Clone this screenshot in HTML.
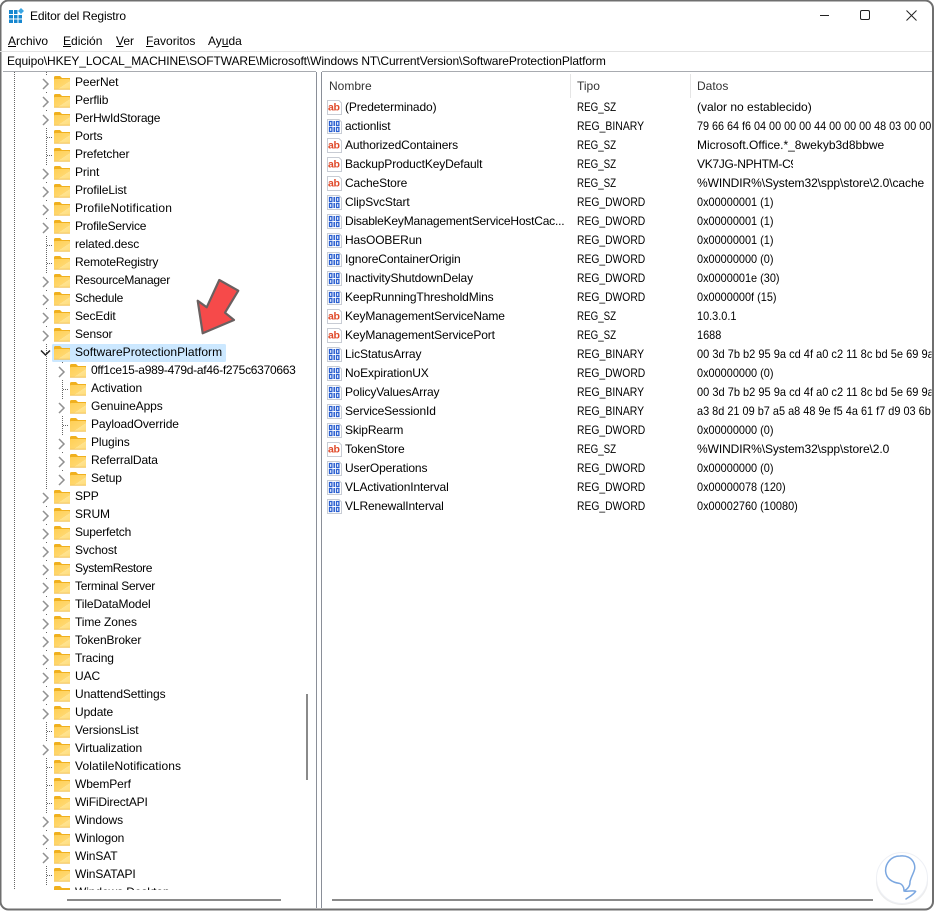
<!DOCTYPE html>
<html><head><meta charset="utf-8"><style>
html,body{margin:0;padding:0;background:#fff}
body{width:935px;height:911px;overflow:hidden;position:relative;font:12px/22px "Liberation Sans",sans-serif;color:#000}
div{position:absolute;white-space:nowrap}
svg{position:absolute;left:0;top:0}
.t{left:75px;letter-spacing:-.1px;margin-top:-1px}.c{left:91px;letter-spacing:-.1px;margin-top:-1px}
.m{margin-top:-1px}
.n{left:345px;letter-spacing:-.12px}
.y,.w,.h,.k{transform-origin:0 50%}
.y{left:577px;transform:scaleX(.86)}.z{transform:scaleX(.815)}.b{transform:scaleX(.87)}
.d{left:697px}.w{transform:scaleX(.91)}.h{transform:scaleX(.9);width:261px;overflow:hidden}.k{transform:scaleX(.92);width:255px;overflow:hidden}
u{text-decoration:underline}
</style></head><body>
<svg width="935" height="911" viewBox="0 0 935 911" fill="none">
<defs>
<linearGradient id="g" x1="0" y1="0" x2="1" y2="1"><stop offset="0" stop-color="#ffcf55"/><stop offset=".6" stop-color="#ffd76e"/><stop offset=".6" stop-color="#ffe38f"/><stop offset="1" stop-color="#ffdc7a"/></linearGradient>
<g id="f"><path d="M0 1.500Q0 0 1.500 0H6L8 2H16V5H0Z" fill="#f0b01e"/><rect y="3" width="16" height="10.500" rx="1" fill="url(#g)"/><path d="M0 13.200H16" stroke="#f2c35a"/></g>
<g id="h"><rect x="-3" y="-8" width="9" height="16" fill="#fff"/><path d="M0 -5L5 0L0 5" stroke="#909090" stroke-width="1.500"/></g>
<g id="s"><path d="M.5 .5H12L14.500 3V14.500H.5Z" fill="#fff" stroke="#c8ccd4"/><text x="1" y="10.500" font-family="Liberation Sans" font-weight="700" font-size="10.500" letter-spacing="-.4" fill="#e04a2a">ab</text></g>
<g id="b"><path d="M.5 .5H12L14.500 3V14.500H.5Z" fill="#fff" stroke="#c8ccd4"/><path d="M2.500 2.500h2.400v4H2.500zM9.500 2.500h2.400v4H9.500zM2.500 8.500h2.400v4H2.500zM9.500 8.500h2.400v4H9.500z" stroke="#2a5fd0" stroke-width="1.300"/><path d="M7.200 2v5M7.200 8v5" stroke="#2a5fd0" stroke-width="1.500"/></g>
</defs>
<rect x=".5" y=".5" width="932.500" height="909" rx="8" fill="#fff" stroke="#6f6f6f" stroke-width="2"/>
<path d="M0 51.500H932" stroke="#e2e2e2"/>
<path d="M3 71.500H316M322 71.500H932" stroke="#a8abb0"/>
<path d="M316.500 72V908M321.500 72V908" stroke="#8a8f98"/>
<!-- app icon -->
<path d="M9 10h4v4H9zM14 10h3.500v4H14zM9 15h4v3.500H9zM14 15h3.500v3.500H14zM18.500 15H22v3.500h-3.500zM9 19.500h4V23H9zM14 19.500h3.500V23H14zM18.500 19.500H22V23h-3.500z" fill="#1787cf"/>
<path d="M21 8L24 11L21 14L18 11Z" fill="#39a6e4"/>
<!-- window controls -->
<path d="M820 15.500H829" stroke="#222"/>
<rect x="860.500" y="10.500" width="9" height="9" rx="1.500" stroke="#222"/>
<path d="M906.500 10.500L916.500 20.500M916.500 10.500L906.500 20.500" stroke="#222"/>
<!-- tree lines -->
<path d="M14.500 72V890M46.500 72V885M62.500 362V480" stroke="#666" stroke-dasharray="1 1"/>
<path d="M47 137.500H53M47 155.500H53M47 245.500H53M47 263.500H53M47 731.500H53M47 767.500H53M47 785.500H53M47 803.500H53M47 875.500H53M63 389.500H69M63 425.500H69" stroke="#666" stroke-dasharray="1 1"/>
<!-- selection -->
<rect x="52" y="344" width="174" height="18" rx="1.500" fill="#cce8ff"/>
<!-- chevrons -->
<use href="#h" x="43" y="84"/><use href="#h" x="43" y="102"/><use href="#h" x="43" y="120"/><use href="#h" x="43" y="174"/><use href="#h" x="43" y="192"/><use href="#h" x="43" y="210"/><use href="#h" x="43" y="228"/><use href="#h" x="43" y="282"/><use href="#h" x="43" y="300"/><use href="#h" x="43" y="318"/><use href="#h" x="43" y="336"/>
<use href="#h" x="59" y="372"/><use href="#h" x="59" y="408"/><use href="#h" x="59" y="444"/><use href="#h" x="59" y="462"/><use href="#h" x="59" y="480"/>
<use href="#h" x="43" y="498"/><use href="#h" x="43" y="516"/><use href="#h" x="43" y="534"/><use href="#h" x="43" y="552"/><use href="#h" x="43" y="570"/><use href="#h" x="43" y="588"/><use href="#h" x="43" y="606"/><use href="#h" x="43" y="624"/><use href="#h" x="43" y="642"/><use href="#h" x="43" y="660"/><use href="#h" x="43" y="678"/><use href="#h" x="43" y="696"/><use href="#h" x="43" y="714"/><use href="#h" x="43" y="750"/><use href="#h" x="43" y="822"/><use href="#h" x="43" y="840"/><use href="#h" x="43" y="858"/>
<path d="M41 350.500L45.500 355L50 350.500" stroke="#222" stroke-width="1.500"/>
<!-- folders -->
<use href="#f" x="54" y="76"/><use href="#f" x="54" y="94"/><use href="#f" x="54" y="112"/><use href="#f" x="54" y="130"/><use href="#f" x="54" y="148"/><use href="#f" x="54" y="166"/><use href="#f" x="54" y="184"/><use href="#f" x="54" y="202"/><use href="#f" x="54" y="220"/><use href="#f" x="54" y="238"/><use href="#f" x="54" y="256"/><use href="#f" x="54" y="274"/><use href="#f" x="54" y="292"/><use href="#f" x="54" y="310"/><use href="#f" x="54" y="328"/><use href="#f" x="54" y="346"/>
<use href="#f" x="70" y="364"/><use href="#f" x="70" y="382"/><use href="#f" x="70" y="400"/><use href="#f" x="70" y="418"/><use href="#f" x="70" y="436"/><use href="#f" x="70" y="454"/><use href="#f" x="70" y="472"/>
<use href="#f" x="54" y="490"/><use href="#f" x="54" y="508"/><use href="#f" x="54" y="526"/><use href="#f" x="54" y="544"/><use href="#f" x="54" y="562"/><use href="#f" x="54" y="580"/><use href="#f" x="54" y="598"/><use href="#f" x="54" y="616"/><use href="#f" x="54" y="634"/><use href="#f" x="54" y="652"/><use href="#f" x="54" y="670"/><use href="#f" x="54" y="688"/><use href="#f" x="54" y="706"/><use href="#f" x="54" y="724"/><use href="#f" x="54" y="742"/><use href="#f" x="54" y="760"/><use href="#f" x="54" y="778"/><use href="#f" x="54" y="796"/><use href="#f" x="54" y="814"/><use href="#f" x="54" y="832"/><use href="#f" x="54" y="850"/><use href="#f" x="54" y="868"/>
<path d="M54 887.500Q54 886 55.500 886H60L62 888H70V890H54Z" fill="#f0b01e"/>
<!-- header separators -->
<path d="M570.500 74V98M690.500 74V98" stroke="#e5e5e5"/>
<!-- list icons -->
<use href="#s" x="327" y="100"/><use href="#b" x="327" y="119"/><use href="#s" x="327" y="138"/><use href="#s" x="327" y="157"/><use href="#s" x="327" y="176"/><use href="#b" x="327" y="195"/><use href="#b" x="327" y="214"/><use href="#b" x="327" y="233"/><use href="#b" x="327" y="252"/><use href="#b" x="327" y="271"/><use href="#b" x="327" y="290"/><use href="#s" x="327" y="309"/><use href="#s" x="327" y="328"/><use href="#b" x="327" y="347"/><use href="#b" x="327" y="366"/><use href="#b" x="327" y="385"/><use href="#b" x="327" y="404"/><use href="#b" x="327" y="423"/><use href="#s" x="327" y="442"/><use href="#b" x="327" y="461"/><use href="#b" x="327" y="480"/><use href="#b" x="327" y="499"/>
<!-- scrollbars -->
<rect x="306" y="694" width="2" height="86" fill="#8a8a8a"/>
<rect x="67" y="899" width="214" height="2" fill="#8a8a8a"/>
<rect x="332" y="899" width="541" height="2" fill="#8a8a8a"/>
</svg>

<div class="m" style="left:30px;top:6px;letter-spacing:-.15px">Editor del Registro</div>
<div class="m" style="left:8px;top:31px"><u>A</u>rchivo</div>
<div class="m" style="left:63px;top:31px"><u>E</u>dición</div>
<div class="m" style="left:116px;top:31px"><u>V</u>er</div>
<div class="m" style="left:146px;top:31px"><u>F</u>avoritos</div>
<div class="m" style="left:208px;top:31px">Ay<u>u</u>da</div>
<div class="m" style="left:7px;top:51px;letter-spacing:-.1px">Equipo\HKEY_LOCAL_MACHINE\SOFTWARE\Microsoft\Windows NT\CurrentVersion\SoftwareProtectionPlatform</div>

<div style="left:0;top:0;width:316px;height:890px;overflow:hidden">
<div class="t" style="top:72px">PeerNet</div>
<div class="t" style="top:90px">Perflib</div>
<div class="t" style="top:108px;letter-spacing:-.2px">PerHwIdStorage</div>
<div class="t" style="top:126px">Ports</div>
<div class="t" style="top:144px">Prefetcher</div>
<div class="t" style="top:162px">Print</div>
<div class="t" style="top:180px">ProfileList</div>
<div class="t" style="top:198px;letter-spacing:.2px">ProfileNotification</div>
<div class="t" style="top:216px;letter-spacing:-.2px">ProfileService</div>
<div class="t" style="top:234px">related.desc</div>
<div class="t" style="top:252px;letter-spacing:-.2px">RemoteRegistry</div>
<div class="t" style="top:270px;letter-spacing:-.25px">ResourceManager</div>
<div class="t" style="top:288px;letter-spacing:-.25px">Schedule</div>
<div class="t" style="top:306px">SecEdit</div>
<div class="t" style="top:324px">Sensor</div>
<div class="t" style="top:342px;letter-spacing:.04px">SoftwareProtectionPlatform</div>
<div class="c" style="top:360px;letter-spacing:-.28px">0ff1ce15-a989-479d-af46-f275c6370663</div>
<div class="c" style="top:378px">Activation</div>
<div class="c" style="top:396px">GenuineApps</div>
<div class="c" style="top:414px">PayloadOverride</div>
<div class="c" style="top:432px">Plugins</div>
<div class="c" style="top:450px">ReferralData</div>
<div class="c" style="top:468px">Setup</div>
<div class="t" style="top:486px">SPP</div>
<div class="t" style="top:504px">SRUM</div>
<div class="t" style="top:522px;letter-spacing:-.2px">Superfetch</div>
<div class="t" style="top:540px">Svchost</div>
<div class="t" style="top:558px;letter-spacing:-.38px">SystemRestore</div>
<div class="t" style="top:576px;letter-spacing:-.27px">Terminal Server</div>
<div class="t" style="top:594px">TileDataModel</div>
<div class="t" style="top:612px">Time Zones</div>
<div class="t" style="top:630px">TokenBroker</div>
<div class="t" style="top:648px">Tracing</div>
<div class="t" style="top:666px">UAC</div>
<div class="t" style="top:684px">UnattendSettings</div>
<div class="t" style="top:702px">Update</div>
<div class="t" style="top:720px">VersionsList</div>
<div class="t" style="top:738px">Virtualization</div>
<div class="t" style="top:756px;letter-spacing:.1px">VolatileNotifications</div>
<div class="t" style="top:774px">WbemPerf</div>
<div class="t" style="top:792px;letter-spacing:-.15px">WiFiDirectAPI</div>
<div class="t" style="top:810px">Windows</div>
<div class="t" style="top:828px">Winlogon</div>
<div class="t" style="top:846px">WinSAT</div>
<div class="t" style="top:864px">WinSATAPI</div>
<div class="t" style="top:882px">Windows Desktop</div>
</div>

<div style="left:329px;top:75px;color:#333">Nombre</div>
<div style="left:577px;top:75px;color:#333">Tipo</div>
<div style="left:697px;top:75px;color:#333">Datos</div>

<div class="n" style="top:96px">(Predeterminado)</div><div class="y z" style="top:96px">REG_SZ</div><div class="d" style="top:96px">(valor no establecido)</div>
<div class="n" style="top:115px">actionlist</div><div class="y b" style="top:115px">REG_BINARY</div><div class="d h" style="top:115px">79 66 64 f6 04 00 00 00 44 00 00 00 48 03 00 00</div>
<div class="n" style="top:134px">AuthorizedContainers</div><div class="y z" style="top:134px">REG_SZ</div><div class="d" style="top:134px">Microsoft.Office.*_8wekyb3d8bbwe</div>
<div class="n" style="top:153px">BackupProductKeyDefault</div><div class="y z" style="top:153px">REG_SZ</div><div class="d" style="top:153px;width:96px;overflow:hidden;letter-spacing:-.3px">VK7JG-NPHTM-C9</div>
<div class="n" style="top:172px">CacheStore</div><div class="y z" style="top:172px">REG_SZ</div><div class="d" style="top:172px;letter-spacing:-.08px">%WINDIR%\System32\spp\store\2.0\cache</div>
<div class="n" style="top:191px">ClipSvcStart</div><div class="y" style="top:191px">REG_DWORD</div><div class="d w" style="top:191px">0x00000001 (1)</div>
<div class="n" style="top:210px;letter-spacing:-.2px">DisableKeyManagementServiceHostCac...</div><div class="y" style="top:210px">REG_DWORD</div><div class="d w" style="top:210px">0x00000001 (1)</div>
<div class="n" style="top:229px">HasOOBERun</div><div class="y" style="top:229px">REG_DWORD</div><div class="d w" style="top:229px">0x00000001 (1)</div>
<div class="n" style="top:248px">IgnoreContainerOrigin</div><div class="y" style="top:248px">REG_DWORD</div><div class="d w" style="top:248px">0x00000000 (0)</div>
<div class="n" style="top:267px">InactivityShutdownDelay</div><div class="y" style="top:267px">REG_DWORD</div><div class="d w" style="top:267px">0x0000001e (30)</div>
<div class="n" style="top:286px">KeepRunningThresholdMins</div><div class="y" style="top:286px">REG_DWORD</div><div class="d w" style="top:286px">0x0000000f (15)</div>
<div class="n" style="top:305px">KeyManagementServiceName</div><div class="y z" style="top:305px">REG_SZ</div><div class="d w" style="top:305px">10.3.0.1</div>
<div class="n" style="top:324px">KeyManagementServicePort</div><div class="y z" style="top:324px">REG_SZ</div><div class="d w" style="top:324px">1688</div>
<div class="n" style="top:343px">LicStatusArray</div><div class="y b" style="top:343px">REG_BINARY</div><div class="d k" style="top:343px">00 3d 7b b2 95 9a cd 4f a0 c2 11 8c bd 5e 69 9a</div>
<div class="n" style="top:362px">NoExpirationUX</div><div class="y" style="top:362px">REG_DWORD</div><div class="d w" style="top:362px">0x00000000 (0)</div>
<div class="n" style="top:381px">PolicyValuesArray</div><div class="y b" style="top:381px">REG_BINARY</div><div class="d k" style="top:381px">00 3d 7b b2 95 9a cd 4f a0 c2 11 8c bd 5e 69 9a</div>
<div class="n" style="top:400px">ServiceSessionId</div><div class="y b" style="top:400px">REG_BINARY</div><div class="d k" style="top:400px;transform:scaleX(.91);width:258px">a3 8d 21 09 b7 a5 a8 48 9e f5 4a 61 f7 d9 03 6b</div>
<div class="n" style="top:419px">SkipRearm</div><div class="y" style="top:419px">REG_DWORD</div><div class="d w" style="top:419px">0x00000000 (0)</div>
<div class="n" style="top:438px">TokenStore</div><div class="y z" style="top:438px">REG_SZ</div><div class="d" style="top:438px;letter-spacing:-.08px">%WINDIR%\System32\spp\store\2.0</div>
<div class="n" style="top:457px">UserOperations</div><div class="y" style="top:457px">REG_DWORD</div><div class="d w" style="top:457px">0x00000000 (0)</div>
<div class="n" style="top:476px">VLActivationInterval</div><div class="y" style="top:476px">REG_DWORD</div><div class="d w" style="top:476px">0x00000078 (120)</div>
<div class="n" style="top:495px">VLRenewalInterval</div><div class="y" style="top:495px">REG_DWORD</div><div class="d w" style="top:495px">0x00002760 (10080)</div>

<svg width="935" height="911" viewBox="0 0 935 911" fill="none">
<path d="M219.300 280L238.300 290.700L225 312.700L234 320L202.700 333.300L197.700 300.700L206.700 307.300Z" fill="#f64a4a" stroke="#6a6060" stroke-width="2.200" stroke-linejoin="round"/>
<ellipse cx="902" cy="881" rx="26" ry="24" fill="#e4e4e4" opacity=".7"/>
<circle cx="902" cy="878" r="25.500" fill="#fff" stroke="#eef0f5"/>
<g transform="translate(800 820) scale(.3333)" stroke="#7ba7e0" stroke-width="4.500" stroke-linecap="round" stroke-linejoin="round">
<path d="M330 185C336 160 350 150 342 130C335 112 318 106 300 108C272 108 255 132 257 155C259 175 275 187 298 190C308 193 312 203 312 213C325 216 338 210 347 214C340 225 328 230 318 237M330 185C331 198 325 206 312 213"/>
</g>
</svg>
</body></html>
